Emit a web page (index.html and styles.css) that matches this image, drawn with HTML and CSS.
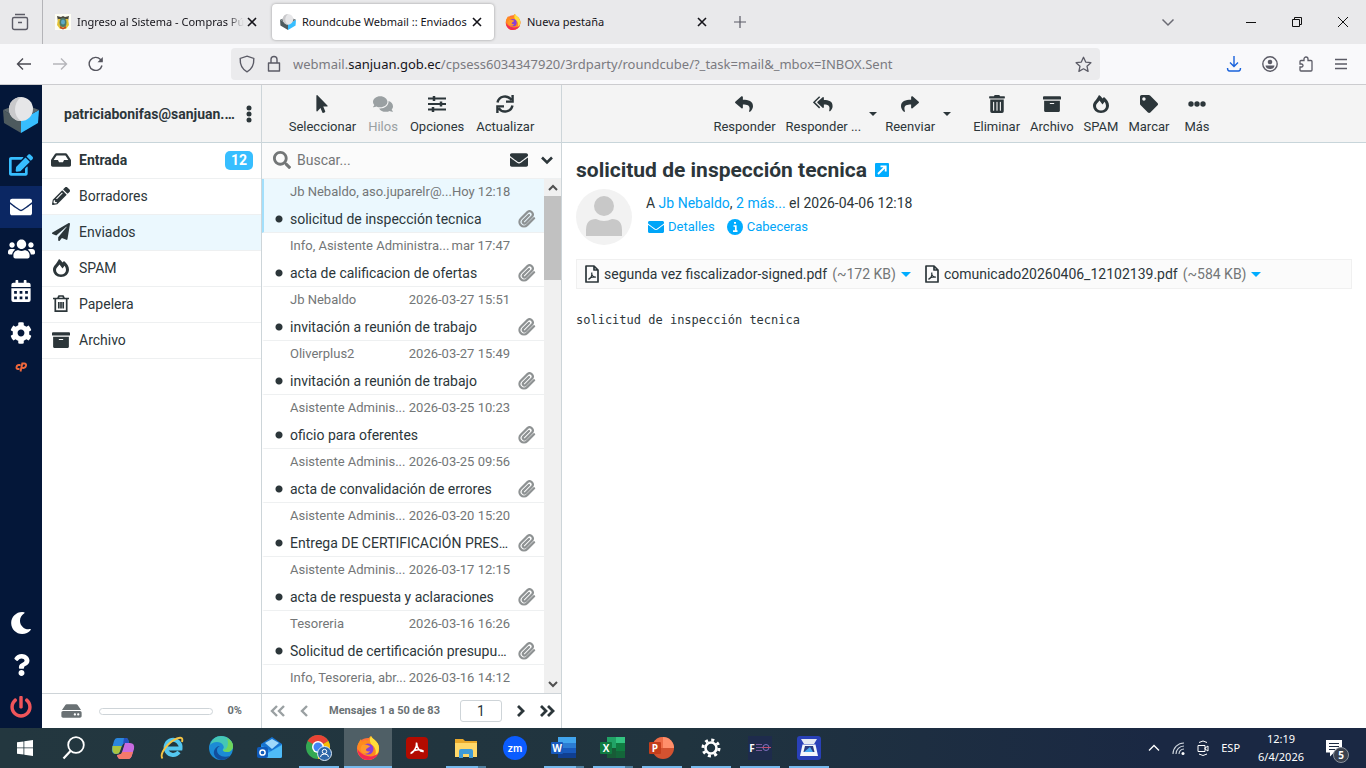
FILE: index.html
```html
<!DOCTYPE html>
<html lang="es">
<head>
	<meta charset="UTF-8">
	<title>Roundcube Webmail :: Enviados</title>
	<link rel="stylesheet" href="styles.css">
</head>
<body>
<svg class="defs" aria-hidden="true">
	<symbol id="i-x" viewBox="0 0 16 16"><path d="M4 4l8 8M12 4l-8 8" fill="none" stroke="currentColor" stroke-width="1.6"/></symbol>
	<symbol id="i-cube" viewBox="0 0 36 36"><path d="M0 13l18 10v13L1 26z" fill="#4d5a5e"/><path d="M36 13L18 23v13l17-10z" fill="#37beff"/><path d="M0 13l18-7 18 7-18 10z" fill="#5d686c"/><circle cx="18" cy="12" r="12" fill="#e6e6e8"/><path d="M18 0a12 12 0 0 0 0 24c-8-5-8-18 0-24z" fill="#c9c9cb"/></symbol>
	<symbol id="i-fox" viewBox="0 0 24 24"><circle cx="12" cy="13" r="11" fill="#ff7139"/><path d="M1.5 10C2 7 4 4.500 5 3l1 3c2-2 4-2 6-1 0-2 1-4 3-5 1 3 7 5 8 11 1 7-4 13-11 13C5 24 .5 18 1.500 10z" fill="#ff8a1e"/><path d="M15 0c1 3 8 5 8 12 0 4-2 7-4 8 2-5 0-9-3-11-2-2-3-6-1-9z" fill="#ffde3a"/><path d="M1.300 13C2 20 6 24 12 24c5 0 9-3 10.500-7-3 3-7 4-11 3-5-1-8-4-10.200-7z" fill="#f22b55"/><circle cx="12" cy="13" r="5.500" fill="#8a3fd6"/><path d="M6 9c3-1 5 0 8 1-1 2-4 2-4 4 0 1 2 2 4 1-1 3-7 4-9 0-1-2 0-4 1-6z" fill="#ff9a2a"/></symbol>
	<symbol id="i-mail" viewBox="0 0 512 512"><path fill="currentColor" d="M502.3 190.8c3.9-3.1 9.7-.2 9.7 4.7V400c0 26.5-21.5 48-48 48H48c-26.5 0-48-21.5-48-48V195.6c0-5 5.7-7.8 9.7-4.7 22.4 17.4 52.1 39.5 154.1 113.6 21.1 15.4 56.7 47.8 92.2 47.6 35.7.3 72-32.8 92.3-47.6 102-74.1 131.6-96.3 154-113.7zM256 320c23.2.4 56.6-29.2 73.4-41.4 132.7-96.3 142.8-104.7 173.4-128.7 5.8-4.5 9.2-11.5 9.2-18.9v-19c0-26.5-21.5-48-48-48H48c-26.5 0-48 21.5-48 48v19c0 7.4 3.4 14.3 9.2 18.9 30.6 23.900 40.700 32.400 173.400 128.700 16.800 12.200 50.200 41.800 73.400 41.400z"/></symbol>
	<symbol id="i-edit" viewBox="0 0 576 512"><path fill="currentColor" d="M402.600 83.200l90.200 90.200c3.800 3.800 3.800 10 0 13.800L274.400 405.600l-92.800 10.300c-12.400 1.400-22.900-9.100-21.500-21.500l10.300-92.800L388.800 83.200c3.800-3.800 10-3.800 13.800 0zm162-22.900l-48.800-48.800c-15.200-15.200-39.900-15.200-55.200 0l-35.400 35.400c-3.800 3.800-3.800 10 0 13.800l90.200 90.200c3.800 3.800 10 3.800 13.800 0l35.400-35.400c15.200-15.300 15.200-40 0-55.200zM384 346.200V448H64V128h229.800c3.200 0 6.200-1.300 8.500-3.500l40-40c7.600-7.600 2.200-20.500-8.500-20.500H48C21.500 64 0 85.500 0 112v352c0 26.500 21.500 48 48 48h352c26.500 0 48-21.500 48-48V306.200c0-10.700-12.900-16-20.500-8.500l-40 40c-2.200 2.300-3.500 5.300-3.500 8.500z"/></symbol>
	<symbol id="i-users" viewBox="0 0 640 512"><path fill="currentColor" d="M96 224c35.300 0 64-28.700 64-64s-28.700-64-64-64-64 28.700-64 64 28.700 64 64 64zm448 0c35.300 0 64-28.700 64-64s-28.700-64-64-64-64 28.700-64 64 28.700 64 64 64zm32 32h-64c-17.600 0-33.500 7.100-45.100 18.600 40.300 22.100 68.900 62 75.100 109.400h66c17.700 0 32-14.300 32-32v-32c0-35.300-28.700-64-64-64zm-256 0c61.900 0 112-50.100 112-112S381.900 32 320 32 208 82.100 208 144s50.100 112 112 112zm76.800 32h-8.300c-20.800 10-43.900 16-68.500 16s-47.600-6-68.500-16h-8.300C179.600 288 128 339.600 128 403.200V432c0 26.500 21.500 48 48 48h288c26.500 0 48-21.500 48-48v-28.800c0-63.600-51.600-115.200-115.200-115.200zm-223.700-13.400C161.500 263.100 145.600 256 128 256H64c-35.300 0-64 28.700-64 64v32c0 17.700 14.300 32 32 32h65.900c6.300-47.400 34.900-87.300 75.200-109.400z"/></symbol>
	<symbol id="i-cal" viewBox="0 0 448 512"><path fill="currentColor" fill-rule="evenodd" d="M0 192h448v272a48 48 0 0 1-48 48H48a48 48 0 0 1-48-48zM64 256v64h64v-64zM192 256v64h64v-64zM320 256v64h64v-64zM64 384v64h64v-64zM192 384v64h64v-64zM320 384v64h64v-64zM400 64h-48V16a16 16 0 0 0-16-16h-32a16 16 0 0 0-16 16v48H160V16a16 16 0 0 0-16-16h-32a16 16 0 0 0-16 16v48H48a48 48 0 0 0-48 48v48h448v-48a48 48 0 0 0-48-48z"/></symbol>
	<symbol id="i-cog" viewBox="0 0 512 512"><path fill="currentColor" d="M487.400 315.700l-42.600-24.600c4.300-23.200 4.300-47 0-70.200l42.600-24.600c4.900-2.800 7.100-8.600 5.500-14-11.100-35.600-30-67.800-54.700-94.600-3.800-4.100-10-5.100-14.800-2.300L380.800 110c-17.900-15.400-38.500-27.300-60.800-35.100V25.800c0-5.600-3.900-10.500-9.400-11.700-36.700-8.200-74.300-7.800-109.200 0-5.500 1.200-9.400 6.100-9.400 11.700V75c-22.200 7.900-42.800 19.800-60.800 35.100L88.700 85.500c-4.900-2.800-11-1.900-14.800 2.300-24.700 26.700-43.600 58.900-54.700 94.600-1.700 5.400.6 11.200 5.500 14L67.300 221c-4.300 23.200-4.300 47 0 70.200l-42.600 24.600c-4.900 2.800-7.100 8.600-5.500 14 11.100 35.600 30 67.800 54.700 94.600 3.800 4.100 10 5.100 14.800 2.300l42.600-24.600c17.900 15.400 38.500 27.300 60.800 35.100v49.200c0 5.600 3.900 10.500 9.400 11.700 36.700 8.200 74.300 7.800 109.200 0 5.500-1.200 9.400-6.100 9.400-11.700v-49.200c22.200-7.900 42.800-19.800 60.800-35.100l42.600 24.600c4.900 2.800 11 1.900 14.800-2.300 24.700-26.700 43.600-58.900 54.700-94.600 1.500-5.500-.7-11.300-5.600-14.100zM256 336c-44.100 0-80-35.900-80-80s35.900-80 80-80 80 35.900 80 80-35.900 80-80 80z"/></symbol>
	<symbol id="i-moon" viewBox="0 0 512 512"><path fill="currentColor" d="M283.211 512c78.962 0 151.079-35.925 198.857-94.792 7.068-8.708-.639-21.430-11.562-19.350-124.203 23.654-238.262-71.576-238.262-196.954 0-72.222 38.662-138.635 101.498-174.394 9.686-5.512 7.250-20.197-3.756-22.230A258.156 258.156 0 0 0 283.211 0c-141.309 0-256 114.511-256 256 0 141.309 114.511 256 256 256z"/></symbol>
	<symbol id="i-help" viewBox="0 0 384 512"><path fill="currentColor" d="M202.021 0C122.202 0 70.503 32.703 29.914 91.026c-7.363 10.580-5.093 25.086 5.178 32.874l43.138 32.709c10.373 7.865 25.132 6.026 33.253-4.148 25.049-31.381 43.630-49.449 82.757-49.449 30.764 0 68.816 19.799 68.816 49.631 0 22.552-18.617 34.134-48.993 51.164-35.423 19.860-82.299 44.576-82.299 106.405V320c0 13.255 10.745 24 24 24h72.471c13.255 0 24-10.745 24-24v-5.773c0-42.860 125.268-44.645 125.268-160.627C377.504 66.256 286.902 0 202.021 0zM192 373.459c-38.196 0-69.271 31.075-69.271 69.271 0 38.195 31.075 69.270 69.271 69.270s69.271-31.075 69.271-69.271-31.075-69.270-69.271-69.270z"/></symbol>
	<symbol id="i-power" viewBox="0 0 512 512"><path fill="currentColor" d="M400 54.100c63 45 104 118.600 104 201.900 0 136.800-110.800 247.700-247.500 248C120 504.300 8.200 393 8 256.400 7.900 173.100 48.900 99.300 111.800 54.200c11.700-8.300 28-4.800 35 7.700L162.600 90c5.900 10.500 3.100 23.800-6.600 31-41.500 30.800-68 79.600-68 134.900-.1 92.300 74.500 168.100 168 168.100 91.600 0 168.600-74.200 168-169.100-.3-51.800-24.700-101.800-68.100-134-9.700-7.200-12.400-20.500-6.500-30.900l15.800-28.100c7-12.400 23.200-16.100 34.800-7.800zM296 264V24c0-13.300-10.700-24-24-24h-32c-13.300 0-24 10.700-24 24v240c0 13.300 10.700 24 24 24h32c13.300 0 24-10.700 24-24z"/></symbol>
	<symbol id="i-inbox" viewBox="0 0 576 512"><path fill="currentColor" d="M567.938 243.908L462.250 85.374A48.003 48.003 0 0 0 422.311 64H153.689a48 48 0 0 0-39.938 21.374L8.062 243.908A47.994 47.994 0 0 0 0 270.533V400c0 26.510 21.490 48 48 48h480c26.510 0 48-21.490 48-48V270.533a47.994 47.994 0 0 0-8.062-26.625zM162.252 128h251.497l85.333 128H376l-32 64H232l-32-64H76.918l85.334-128z"/></symbol>
	<symbol id="i-pencil" viewBox="0 0 512 512"><path fill="currentColor" d="M497.900 142.100l-46.100 46.100c-4.700 4.700-12.300 4.700-17 0l-111-111c-4.700-4.700-4.700-12.300 0-17l46.100-46.100c18.700-18.700 49.100-18.700 67.900 0l60.100 60.100c18.800 18.700 18.800 49.100 0 67.900zM284.200 99.800L21.600 362.400.4 483.900c-2.900 16.400 11.400 30.600 27.800 27.800l121.500-21.300 262.600-262.600c4.700-4.700 4.700-12.300 0-17l-111-111c-4.800-4.700-12.400-4.700-17.100 0zM124.100 339.900c-5.500-5.500-5.500-14.300 0-19.800l154-154c5.500-5.500 14.300-5.500 19.800 0s5.500 14.300 0 19.800l-154 154c-5.500 5.500-14.300 5.500-19.800 0zM88 424h48v36.300l-64.500 11.300-31.100-31.100L51.700 376H88v48z"/></symbol>
	<symbol id="i-plane" viewBox="0 0 512 512"><path fill="currentColor" d="M476 3.200L12.500 270.600c-18.100 10.400-15.800 35.600 2.200 43.200L121 358.400l287.300-253.200c5.500-4.900 13.300 2.600 8.600 8.300L176 407v80.500c0 23.600 28.500 32.900 42.500 15.800L282 426l124.600 52.200c14.200 6 30.400-2.900 33-18.200l72-432C515 7.800 493.300-6.800 476 3.200z"/></symbol>
	<symbol id="i-fire" viewBox="0 0 16 18"><path fill="currentColor" fill-rule="evenodd" d="M6 0c1.500 1 2.500 2 3.500 3.500L11 2c3 2.500 5 5.500 5 8.500C16 15 12.500 18 8 18s-8-3-8-7.500C0 7 4 4.500 6 0zM6.500 5.500C5 7.500 3 9 3 11a5 4.500 0 0 0 10 0c0-1.500-.6-3-1.400-4.300L9.500 9.500z"/></symbol>
	<symbol id="i-bin" viewBox="0 0 16 18"><path fill="none" stroke="currentColor" stroke-width="1.700" d="M0 3.500h16M2.300 4v12.200h11.400V4M5 3l1-2h4l1 2M5.800 7v6.500M8 7v6.500M10.200 7v6.500"/></symbol>
	<symbol id="i-trash" viewBox="0 0 448 512"><path fill="currentColor" d="M32 464a48 48 0 0 0 48 48h288a48 48 0 0 0 48-48V128H32zm272-256a16 16 0 0 1 32 0v224a16 16 0 0 1-32 0zm-96 0a16 16 0 0 1 32 0v224a16 16 0 0 1-32 0zm-96 0a16 16 0 0 1 32 0v224a16 16 0 0 1-32 0zM432 32H312l-9.400-18.700A24 24 0 0 0 281.100 0H166.800a23.720 23.720 0 0 0-21.400 13.300L136 32H16A16 16 0 0 0 0 48v32a16 16 0 0 0 16 16h416a16 16 0 0 0 16-16V48a16 16 0 0 0-16-16z"/></symbol>
	<symbol id="i-box" viewBox="0 0 512 512"><path fill="currentColor" d="M32 448c0 17.700 14.300 32 32 32h384c17.700 0 32-14.300 32-32V160H32v288zm160-212c0-6.600 5.400-12 12-12h104c6.600 0 12 5.400 12 12v8c0 6.600-5.400 12-12 12H204c-6.600 0-12-5.400-12-12v-8zM480 32H32C14.300 32 0 46.300 0 64v48c0 8.800 7.200 16 16 16h480c8.800 0 16-7.200 16-16V64c0-17.700-14.300-32-32-32z"/></symbol>
	<symbol id="i-hdd" viewBox="0 0 576 512"><path fill="currentColor" d="M576 304v96c0 26.510-21.490 48-48 48H48c-26.510 0-48-21.490-48-48v-96c0-26.510 21.490-48 48-48h480c26.510 0 48 21.490 48 48zm-48-80a79.557 79.557 0 0 1 30.777 6.165L462.250 85.374A48.003 48.003 0 0 0 422.311 64H153.689a48 48 0 0 0-39.938 21.374L17.223 230.165A79.557 79.557 0 0 1 48 224h480zm-48 96c-17.673 0-32 14.327-32 32s14.327 32 32 32 32-14.327 32-32-14.327-32-32-32zm-96 0c-17.673 0-32 14.327-32 32s14.327 32 32 32 32-14.327 32-32-14.327-32-32-32z"/></symbol>
	<symbol id="i-pointer" viewBox="0 0 320 512"><path fill="currentColor" d="M302.189 329.126H196.105l55.831 135.993c3.889 9.428-.555 19.999-9.444 23.999l-49.165 21.427c-9.165 4-19.443-.571-23.332-9.714l-53.053-129.136-86.664 89.138C18.729 472.710 0 463.554 0 447.977V18.299C0 1.899 19.921-6.096 30.277 5.443l284.412 292.542c11.472 11.179 3.007 31.141-12.500 31.141z"/></symbol>
	<symbol id="i-chat" viewBox="0 0 576 512"><path fill="currentColor" d="M416 192c0-88.400-93.100-160-208-160S0 103.600 0 192c0 34.300 14.100 65.900 38 92-13.400 30.200-35.500 54.200-35.800 54.500-2.200 2.300-2.800 5.700-1.500 8.700S4.800 352 8 352c36.600 0 66.900-12.300 88.700-25 32.200 15.700 70.300 25 111.300 25 114.900 0 208-71.600 208-160zm122 220c23.900-26 38-57.700 38-92 0-66.900-53.500-124.200-129.300-148.100.9 6.600 1.300 13.300 1.300 20.100 0 105.900-107.700 192-240 192-10.800 0-21.300-.8-31.700-1.900C207.800 439.600 281.800 480 368 480c41 0 79.100-9.200 111.300-25 21.800 12.700 52.100 25 88.700 25 3.200 0 6.100-1.900 7.300-4.800 1.300-2.900.7-6.300-1.500-8.700-.3-.3-22.400-24.200-35.800-54.500z"/></symbol>
	<symbol id="i-sliders" viewBox="0 0 18 18"><path fill="none" stroke="currentColor" stroke-width="2" d="M0 3.500h18M0 9h18M0 14.500h18"/><path fill="none" stroke="currentColor" stroke-width="2.500" d="M6 1v5M13 6.500v5M5 12v5"/></symbol>
	<symbol id="i-sync" viewBox="0 0 18 18"><path fill="none" stroke="currentColor" stroke-width="2.400" d="M1.500 7.500a7.600 7.600 0 0 1 13.800-2.600M16.500 10.500a7.600 7.600 0 0 1-13.800 2.600M16.600 0v6.600H10M1.400 18v-6.600H8"/></symbol>
	<symbol id="i-search" viewBox="0 0 512 512"><path fill="currentColor" d="M505 442.700L405.300 343c-4.500-4.500-10.600-7-17-7H372c27.600-35.300 44-79.700 44-128C416 93.100 322.900 0 208 0S0 93.100 0 208s93.100 208 208 208c48.300 0 92.700-16.400 128-44v16.300c0 6.400 2.500 12.500 7 17l99.700 99.700c9.400 9.400 24.600 9.400 33.900 0l28.300-28.300c9.400-9.400 9.400-24.600.1-34zM208 336c-70.700 0-128-57.200-128-128 0-70.700 57.200-128 128-128 70.700 0 128 57.200 128 128 0 70.700-57.200 128-128 128z"/></symbol>
	<symbol id="i-down" viewBox="0 0 12 12"><path fill="none" stroke="currentColor" stroke-width="2.600" d="M1 3.500l5 5 5-5"/></symbol>
	<symbol id="i-clip" viewBox="0 0 24 24"><path fill="none" stroke="currentColor" stroke-width="3" stroke-linecap="round" d="M21.400 11l-9.200 9.200a6 6 0 0 1-8.500-8.500l9.200-9.200a4.300 4.300 0 0 1 6 6l-9.200 9.200a2.200 2.200 0 0 1-3-3l8-8"/></symbol>
	<symbol id="i-reply" viewBox="0 0 512 512"><path fill="currentColor" d="M8.309 189.836L184.313 37.851C199.719 24.546 224 35.347 224 56.015v80.053c160.629 1.839 288 34.032 288 186.258 0 61.441-39.581 122.309-83.333 154.132-13.653 9.931-33.111-2.533-28.077-18.631 45.344-145.012-21.507-183.510-176.590-185.742V360c0 20.700-24.300 31.453-39.687 18.164l-176.004-152c-11.071-9.562-11.086-26.753 0-36.328z"/></symbol>
	<symbol id="i-replyall" viewBox="0 0 600 512"><path fill="currentColor" d="M136 190L290 50c14-13 36-3 36 17v72c150 4 262 36 262 184 0 60-36 118-76 150-14 10-32-2-27-18 38-140-20-180-159-184v84c0 20-24 31-38 17L136 226a24 24 0 0 1 0-36z"/><path fill="none" stroke="currentColor" stroke-width="44" d="M200 40L30 206l170 166"/></symbol>
	<symbol id="i-tag" viewBox="0 0 512 512"><path fill="currentColor" d="M0 252.118V48C0 21.490 21.490 0 48 0h204.118a48 48 0 0 1 33.941 14.059l211.882 211.882c18.745 18.745 18.745 49.137 0 67.882L293.823 497.941c-18.745 18.745-49.137 18.745-67.882 0L14.059 286.059A48 48 0 0 1 0 252.118zM112 64c-26.510 0-48 21.490-48 48s21.490 48 48 48 48-21.490 48-48-21.490-48-48-48z"/></symbol>
	<symbol id="i-dots" viewBox="0 0 18 18"><g fill="currentColor"><circle cx="3" cy="9" r="2.700"/><circle cx="9" cy="9" r="2.700"/><circle cx="15" cy="9" r="2.700"/></g></symbol>
	<symbol id="i-pdf" viewBox="0 0 14 18"><path fill="none" stroke="currentColor" stroke-width="1.700" stroke-linejoin="round" d="M1 1h8l4 4v12H1zM9 1v4h4"/><path fill="none" stroke="currentColor" stroke-width="1.200" d="M3.500 14.500c2-1 3.600-4 3.300-7M6.600 8c.2 3 2.400 4.600 4.400 4M3.600 14c1.800-1.700 4.600-2.300 7.200-2"/></symbol>
</svg>

<header class="browser">
	<div class="tabbar">
		<button class="recent" aria-label="Pestañas recientes"><svg width="18" height="18" viewBox="0 0 18 18"><path d="M4 1.500h10M1.500 6q0-1.500 1.500-1.500h12q1.500 0 1.500 1.500v8.500q0 2-2 2h-11q-2 0-2-2zM7 9.500h4" fill="none" stroke="#5b5b66" stroke-width="1.400"/></svg></button>
		<div class="tab">
			<svg width="16" height="16" viewBox="0 0 16 16"><path fill="#fdfdf4" d="M0 0h16v16H0z"/><path d="M2 2l4 1 2-1 2 1 4-1-1 5H3z" fill="#4c4a3c"/><path d="M3 5h10l1 6-3 4H5l-3-4z" fill="#e3c235"/><ellipse cx="8" cy="8.500" rx="3.500" ry="4.500" fill="#4d7a6b"/><ellipse cx="8" cy="8" rx="2" ry="2.500" fill="#5fa9c9"/><path d="M5 12l3 2 3-2v2l-3 1.500L5 14z" fill="#c2442f"/></svg>
			<span class="title fade">Ingreso al Sistema - Compras Públicas</span>
			<button class="close" aria-label="Cerrar"><svg width="16" height="16"><use href="#i-x"/></svg></button>
		</div>
		<div class="tab active">
			<svg width="16" height="16"><use href="#i-cube"/></svg>
			<span class="title">Roundcube Webmail :: Enviados</span>
			<button class="close" aria-label="Cerrar"><svg width="16" height="16"><use href="#i-x"/></svg></button>
		</div>
		<div class="tab">
			<svg width="16" height="16"><use href="#i-fox"/></svg>
			<span class="title">Nueva pestaña</span>
			<button class="close" aria-label="Cerrar"><svg width="16" height="16"><use href="#i-x"/></svg></button>
		</div>
		<button class="newtab" aria-label="Nueva pestaña"><svg width="12" height="12" viewBox="0 0 12 12"><path d="M6 0v12M0 6h12" stroke="#5b5b66" stroke-width="1.200"/></svg></button>
		<div class="winbtns">
			<button aria-label="Listar pestañas"><svg width="14" height="14" viewBox="0 0 14 14"><path d="M1.500 4.500L7 10l5.500-5.500" fill="none" stroke="#6b6b74" stroke-width="1.500"/></svg></button>
			<button class="min" aria-label="Minimizar"><svg width="10" height="10" viewBox="0 0 10 10"><path d="M0 5.500h10" stroke="#111"/></svg></button>
			<button aria-label="Restaurar"><svg width="10" height="10" viewBox="0 0 10 10"><path d="M.5 2.500h7v7h-7zM2.500 2.500v-2h7v7h-2" fill="none" stroke="#111"/></svg></button>
			<button aria-label="Cerrar ventana"><svg width="10" height="10" viewBox="0 0 10 10"><path d="M0 0l10 10M10 0L0 10" stroke="#111"/></svg></button>
		</div>
	</div>
	<div class="navbar">
		<div class="navbtns">
			<button aria-label="Atrás"><svg width="16" height="16" viewBox="0 0 16 16"><path d="M15 8H2M7 2.500L1.500 8 7 13.500" fill="none" stroke="#4a4a52" stroke-width="1.400"/></svg></button>
			<button aria-label="Adelante"><svg width="16" height="16" viewBox="0 0 16 16"><path d="M1 8h13M9 2.500L14.500 8 9 13.500" fill="none" stroke="#b5b5ba" stroke-width="1.400"/></svg></button>
			<button aria-label="Recargar"><svg width="16" height="16" viewBox="0 0 16 16"><path d="M14 9.500A6.500 6.500 0 1 1 12.500 3.500L14 5" fill="none" stroke="#55555e" stroke-width="1.400"/><path d="M14.800 1v5.300H9.500z" fill="#55555e"/></svg></button>
		</div>
		<div class="url">
			<svg width="16" height="18" viewBox="0 0 16 18"><path d="M8 1.200l6.800 2.200c.3 6-1.500 10.600-6.800 13.400C2.700 14 .9 9.400 1.200 3.400z" fill="none" stroke="#5b5b66" stroke-width="1.400"/></svg>
			<svg width="14" height="18" viewBox="0 0 14 18"><path d="M1.500 8h11v8h-11zM4 8V4.500a3 3 0 0 1 6 0V8" fill="none" stroke="#5b5b66" stroke-width="1.400" stroke-linejoin="round"/></svg>
			<span class="address">webmail.<b>sanjuan.gob.ec</b>/cpsess6034347920/3rdparty/roundcube/?_task=mail&amp;_mbox=INBOX.Sent</span>
			<svg width="17" height="17" viewBox="0 0 17 17"><path d="M8.500 1.300l2.200 4.800 5.200.6-3.900 3.500 1.100 5.200-4.600-2.600-4.600 2.600L5 10.200 1.100 6.700l5.200-.6z" fill="none" stroke="#5b5b66" stroke-width="1.300" stroke-linejoin="round"/></svg>
		</div>
		<div class="tools">
			<button aria-label="Descargas"><svg width="16" height="16" viewBox="0 0 16 16"><path d="M8 0v10.500M4 6.500l4 4 4-4M1.500 12q0 3 2 3h9q2 0 2-3" fill="none" stroke="#1a63dc" stroke-width="1.400"/></svg></button>
			<button aria-label="Cuenta"><svg width="16" height="16" viewBox="0 0 16 16"><circle cx="8" cy="8" r="7.200" fill="none" stroke="#5b5b66" stroke-width="1.400"/><circle cx="8" cy="6" r="2.300" fill="#5b5b66"/><path d="M3.500 9.500h9q-.5 3.500-4.500 3.500T3.500 9.500z" fill="#5b5b66"/></svg></button>
			<button aria-label="Extensiones"><svg width="16" height="16" viewBox="0 0 16 16"><path d="M2 5.500q0-1 1-1h3V3a2 2 0 0 1 4 0v1.500h3q1 0 1 1V14q0 1-1 1H3q-1 0-1-1v-3h1.500a1.500 1.500 0 0 0 0-3H2z" fill="none" stroke="#5b5b66" stroke-width="1.300"/></svg></button>
			<button aria-label="Menú"><svg width="14" height="14" viewBox="0 0 14 14"><path d="M1 2.500h12M1 7h12M1 11.500h12" stroke="#5b5b66" stroke-width="1.300"/></svg></button>
		</div>
	</div>
</header>

<div class="app">
	<nav class="taskmenu">
		<svg class="logo" width="36" height="36"><use href="#i-cube"/></svg>
		<a class="compose" href="#" aria-label="Redactar"><svg width="24" height="22"><use href="#i-edit"/></svg></a>
		<a class="selected" href="#" aria-label="Correo"><svg width="22" height="22"><use href="#i-mail"/></svg></a>
		<a href="#" aria-label="Contactos"><svg width="27" height="22"><use href="#i-users"/></svg></a>
		<a href="#" aria-label="Calendario"><svg width="20" height="22"><use href="#i-cal"/></svg></a>
		<a href="#" aria-label="Configuración"><svg width="22" height="22"><use href="#i-cog"/></svg></a>
		<a class="cpanel" href="#" aria-label="cPanel"><svg width="12" height="10" viewBox="0 0 12 10"><path d="M5.500 3H3.800Q2 3 1.600 5T3 7h1.500M5.500 9.500L7.300 1.500h2Q11.400 1.500 11 3.700T8.500 6H7.300" fill="none" stroke="#f0683c" stroke-width="1.900"/></svg></a>
		<a class="bottom" href="#" aria-label="Modo oscuro"><svg width="22" height="22"><use href="#i-moon"/></svg></a>
		<a href="#" aria-label="Ayuda"><svg width="17" height="22"><use href="#i-help"/></svg></a>
		<a class="logout" href="#" aria-label="Cerrar sesión"><svg width="22" height="22"><use href="#i-power"/></svg></a>
	</nav>

	<aside class="sidebar">
		<div class="header account">
			<span>patriciabonifas@sanjuan.gob.ec</span>
			<button aria-label="Opciones de carpeta"><svg width="6" height="18" viewBox="0 0 6 18"><g fill="#2c363a"><circle cx="3" cy="3" r="2.500"/><circle cx="3" cy="9" r="2.500"/><circle cx="3" cy="15" r="2.500"/></g></svg></button>
		</div>
		<ul class="folders">
			<li class="unread"><a href="#"><svg width="20" height="18"><use href="#i-inbox"/></svg>Entrada<span class="count">12</span></a></li>
			<li><a href="#"><svg width="20" height="18"><use href="#i-pencil"/></svg>Borradores</a></li>
			<li class="selected"><a href="#"><svg width="20" height="18"><use href="#i-plane"/></svg>Enviados</a></li>
			<li><a href="#"><svg width="20" height="18"><use href="#i-fire"/></svg>SPAM</a></li>
			<li><a href="#"><svg width="20" height="18"><use href="#i-bin"/></svg>Papelera</a></li>
			<li><a href="#"><svg width="20" height="18"><use href="#i-box"/></svg>Archivo</a></li>
		</ul>
		<div class="footer quota">
			<svg width="21" height="18"><use href="#i-hdd"/></svg>
			<span class="bar"></span>
			<span>0%</span>
		</div>
	</aside>

	<section class="list">
		<div class="header toolbar">
			<button><svg width="18" height="18"><use href="#i-pointer"/></svg>Seleccionar</button>
			<button disabled><svg width="20" height="18"><use href="#i-chat"/></svg>Hilos</button>
			<button><svg width="18" height="18"><use href="#i-sliders"/></svg>Opciones</button>
			<button><svg width="18" height="18"><use href="#i-sync"/></svg>Actualizar</button>
		</div>
		<div class="searchbar">
			<svg width="18" height="18"><use href="#i-search"/></svg>
			<input type="text" placeholder="Buscar..." aria-label="Buscar">
			<button aria-label="No leídos"><svg width="18" height="18"><use href="#i-mail"/></svg></button>
			<button aria-label="Opciones de búsqueda"><svg width="12" height="12"><use href="#i-down"/></svg></button>
		</div>
		<div class="scroller">
			<ul class="messages">
				<li class="selected">
					<div class="meta"><span>Jb Nebaldo, aso.juparelr@...</span><span>Hoy 12:18</span></div>
					<a href="#">solicitud de inspección tecnica</a>
					<svg class="clip" width="18" height="18"><use href="#i-clip"/></svg>
				</li>
				<li>
					<div class="meta"><span>Info, Asistente Administra...</span><span>mar 17:47</span></div>
					<a href="#">acta de calificacion de ofertas</a>
					<svg class="clip" width="18" height="18"><use href="#i-clip"/></svg>
				</li>
				<li>
					<div class="meta"><span>Jb Nebaldo</span><span>2026-03-27 15:51</span></div>
					<a href="#">invitación a reunión de trabajo</a>
					<svg class="clip" width="18" height="18"><use href="#i-clip"/></svg>
				</li>
				<li>
					<div class="meta"><span>Oliverplus2</span><span>2026-03-27 15:49</span></div>
					<a href="#">invitación a reunión de trabajo</a>
					<svg class="clip" width="18" height="18"><use href="#i-clip"/></svg>
				</li>
				<li>
					<div class="meta"><span>Asistente Adminis...</span><span>2026-03-25 10:23</span></div>
					<a href="#">oficio para oferentes</a>
					<svg class="clip" width="18" height="18"><use href="#i-clip"/></svg>
				</li>
				<li>
					<div class="meta"><span>Asistente Adminis...</span><span>2026-03-25 09:56</span></div>
					<a href="#">acta de convalidación de errores</a>
					<svg class="clip" width="18" height="18"><use href="#i-clip"/></svg>
				</li>
				<li>
					<div class="meta"><span>Asistente Adminis...</span><span>2026-03-20 15:20</span></div>
					<a href="#">Entrega DE CERTIFICACIÓN PRESUPUESTARIA</a>
					<svg class="clip" width="18" height="18"><use href="#i-clip"/></svg>
				</li>
				<li>
					<div class="meta"><span>Asistente Adminis...</span><span>2026-03-17 12:15</span></div>
					<a href="#">acta de respuesta y aclaraciones</a>
					<svg class="clip" width="18" height="18"><use href="#i-clip"/></svg>
				</li>
				<li>
					<div class="meta"><span>Tesoreria</span><span>2026-03-16 16:26</span></div>
					<a href="#">Solicitud de certificación presupuestaria</a>
					<svg class="clip" width="18" height="18"><use href="#i-clip"/></svg>
				</li>
				<li>
					<div class="meta"><span>Info, Tesoreria, abr...</span><span>2026-03-16 14:12</span></div>
				</li>
			</ul>
			<div class="scrollbar">
				<svg width="10" height="10" viewBox="0 0 10 10"><path d="M1 7l4-4 4 4" fill="none" stroke="#505050" stroke-width="2"/></svg>
				<div class="thumb"></div>
				<svg width="10" height="10" viewBox="0 0 10 10"><path d="M1 3l4 4 4-4" fill="none" stroke="#505050" stroke-width="2"/></svg>
			</div>
		</div>
		<div class="footer pager">
			<button disabled aria-label="Primera página"><svg width="16" height="14" viewBox="0 0 16 14"><path d="M8 2L3 7l5 5M15 2l-5 5 5 5" fill="none" stroke="currentColor" stroke-width="2.400"/></svg></button>
			<button disabled aria-label="Página anterior"><svg width="10" height="14" viewBox="0 0 10 14"><path d="M8 2L3 7l5 5" fill="none" stroke="currentColor" stroke-width="2.400"/></svg></button>
			<span>Mensajes 1 a 50 de 83</span>
			<input type="text" value="1" aria-label="Página">
			<button aria-label="Página siguiente"><svg width="10" height="14" viewBox="0 0 10 14"><path d="M2 2l5 5-5 5" fill="none" stroke="currentColor" stroke-width="2.800"/></svg></button>
			<button aria-label="Última página"><svg width="16" height="14" viewBox="0 0 16 14"><path d="M1 2l5 5-5 5M8 2l5 5-5 5" fill="none" stroke="currentColor" stroke-width="2.800"/></svg></button>
		</div>
	</section>

	<main class="content">
		<div class="header toolbar">
			<button><svg width="18" height="18"><use href="#i-reply"/></svg>Responder</button>
			<button><svg width="20" height="18"><use href="#i-replyall"/></svg>Responder ...</button>
			<button class="drop" aria-label="Opciones de respuesta"></button>
			<button><svg class="flip" width="18" height="18"><use href="#i-reply"/></svg>Reenviar</button>
			<button class="drop" aria-label="Opciones de reenvío"></button>
			<button class="spaced"><svg width="18" height="18"><use href="#i-trash"/></svg>Eliminar</button>
			<button><svg width="18" height="18"><use href="#i-box"/></svg>Archivo</button>
			<button><svg width="18" height="18"><use href="#i-fire"/></svg>SPAM</button>
			<button><svg width="18" height="18"><use href="#i-tag"/></svg>Marcar</button>
			<button class="more"><svg width="18" height="18"><use href="#i-dots"/></svg>Más</button>
		</div>
		<article class="message">
			<h2>solicitud de inspección tecnica <a href="#" aria-label="Abrir en ventana nueva"><svg width="14" height="14" viewBox="0 0 14 14"><rect width="14" height="14" rx="1" fill="#00acff"/><path d="M3 11l7-7M5.500 3.300h5.200v5.200" fill="none" stroke="#fff" stroke-width="1.800"/></svg></a></h2>
			<div class="summary">
				<svg width="56" height="56" viewBox="0 0 56 56"><circle cx="28" cy="28" r="28" fill="#f2f2f2"/><circle cx="28" cy="17" r="10" fill="#c8c8c8"/><path d="M10 47v-6q0-11 10-11 8 4 16 0 10 0 10 11v6z" fill="#c8c8c8"/></svg>
				<div>
					<p>A <a href="#">Jb Nebaldo</a>, <a href="#">2 más...</a> el 2026-04-06 12:18</p>
					<p class="links">
						<a href="#"><svg width="16" height="16"><use href="#i-mail"/></svg>Detalles</a>
						<a href="#"><svg width="16" height="16" viewBox="0 0 16 16"><circle cx="8" cy="8" r="8" fill="#00acff"/><path d="M6.500 7h2.300v5M6 12.200h4.500M7 3.800h2" fill="none" stroke="#fff" stroke-width="1.700"/></svg>Cabeceras</a>
					</p>
				</div>
			</div>
			<ul class="attachments">
				<li><a href="#"><svg width="14" height="18"><use href="#i-pdf"/></svg>segunda vez fiscalizador-signed.pdf <span>(~172 KB)</span></a><button aria-label="Opciones"></button></li>
				<li><a href="#"><svg width="14" height="18"><use href="#i-pdf"/></svg>comunicado20260406_12102139.pdf <span>(~584 KB)</span></a><button aria-label="Opciones"></button></li>
			</ul>
			<pre>solicitud de inspección tecnica</pre>
		</article>
	</main>
</div>

<footer class="taskbar">
	<button aria-label="Inicio"><svg width="16" height="16" viewBox="0 0 16 16"><path fill="#fff" d="M0 2.300L6.500 1.400v6.100H0zM7.300 1.300L16 0v7.500H7.300zM0 8.300h6.500v6.300L0 13.700zM7.300 8.300H16V16l-8.700-1.200z"/></svg></button>
	<button aria-label="Buscar"><svg width="24" height="24" viewBox="0 0 24 24"><circle cx="14" cy="9" r="7.800" fill="none" stroke="#fff" stroke-width="1.800"/><path d="M8.500 15L1.500 22.500" stroke="#fff" stroke-width="2.200"/></svg></button>
	<button aria-label="Copilot"><svg width="24" height="24" viewBox="0 0 24 24"><path d="M6 2h9q2 0 2.500 3l.5 2h-4q-2 0-3 3l-2 6q-1 2-4 2-5 0-4-6l2-7Q4 2 6 2z" fill="#2a86dd"/><path d="M1.500 10q-1 8 3.500 8 3 0 4-2l2-6z" fill="#a9c43f"/><path d="M13 2h2q2 0 2.500 3l.5 2h-4l-2 1z" fill="#2450c0"/><path d="M14 7h5q5 0 4 6l-2 6q-1 4-4 4H9q-2 0-3-4 4 0 5-3l2-6z" fill="#c86be0"/><path d="M6 19q4 0 5-3h11l-1 3q-1 4-4 4H9q-2 0-3-4z" fill="#f4796b"/><path d="M11 10h1.500L10 18H8z" fill="#22363f"/></svg></button>
	<button aria-label="Internet Explorer"><svg width="24" height="24" viewBox="0 0 24 24"><path d="M19 16a7.500 7.500 0 1 1 1.500-3.500H6" fill="none" stroke="#54c6ef" stroke-width="4"/><path d="M2.500 22.500C-1 18 8 6 17 2.500c5-2 6 0 5 3.500" fill="none" stroke="#f5c444" stroke-width="1.900"/></svg></button>
	<button aria-label="Edge"><svg width="24" height="24" viewBox="0 0 24 24"><circle cx="12" cy="12" r="12" fill="#1c8bd5"/><path d="M1 9C3 3 7 0 12 0c7 0 12 5 12 10 0 4-3 6-6 6-3 0-5-1-4-3 1-1 1-2 0-4-2-4-10-4-13 0z" fill="#45c7b5"/><path d="M18 2c4 2 6 5 6 8 0 4-3 6-6 6-2 0-4-1-4-2 5 0 6-7 4-12z" fill="#6ed65c"/><path d="M8 14c0 5 5 8 13 6-3 3-6 4-9 4-5-1-8-5-7-9 1-3 3-5 6-5-2 1-3 2-3 4z" fill="#124f9d"/></svg></button>
	<button aria-label="Outlook"><svg width="26" height="24" viewBox="0 0 26 24"><path d="M4 8L15 1l10 7v12q0 2-2 2H6q-2 0-2-2z" fill="#1673d0"/><path d="M8 7l7-4 7 4-7 6z" fill="#9fd8fb"/><path d="M4 9l10 6 11-7v12q0 2-2 2H6q-2 0-2-2z" fill="#2590ea"/><path d="M4 21l21-12v11q0 2-2 2H6z" fill="#4fbcf8"/><rect y="11" width="11" height="11" rx="2" fill="#0f5bbb"/><circle cx="5.500" cy="16.500" r="2.600" fill="none" stroke="#fff" stroke-width="1.500"/></svg></button>
	<button class="open" aria-label="Chrome"><svg width="26" height="26" viewBox="0 0 26 26"><circle cx="12" cy="12" r="12" fill="#34a853"/><path d="M12 12L1.600 6A12 12 0 0 1 22.400 6z" fill="#ea4335"/><path d="M12 12L22.400 6A12 12 0 0 1 12 24z" fill="#fbbc05"/><circle cx="12" cy="12" r="6" fill="#fff"/><circle cx="12" cy="12" r="4.500" fill="#4285f4"/><circle cx="18.500" cy="18.500" r="7" fill="#2c66a8" stroke="#dbe9f8"/><circle cx="18.500" cy="16.500" r="2.200" fill="none" stroke="#fff"/><path d="M14.500 22q0-3 4-3t4 3" fill="none" stroke="#fff"/></svg></button>
	<button class="open current" aria-label="Firefox"><svg width="24" height="24"><use href="#i-fox"/></svg></button>
	<button aria-label="Acrobat"><svg width="22" height="22" viewBox="0 0 22 22"><rect width="22" height="22" rx="4" fill="#b30b00"/><path d="M4.500 16.500c3-1 6.500-6 6-11M10.700 6c0 5 3 9 7 8.500M5 16c3-3 8-4 12.500-2" fill="none" stroke="#fff" stroke-width="1.500"/></svg></button>
	<button class="open multi" aria-label="Explorador"><svg width="22" height="20" viewBox="0 0 22 20"><path d="M0 1h8l2 2h12v16H0z" fill="#e9a92b"/><path d="M0 5h22v14H0z" fill="#ffd869"/><path d="M4 20v-7q0-2 2-2h10q2 0 2 2v7h-4v-4H8v4z" fill="#3f9bd8"/></svg></button>
	<button aria-label="Zoom"><span class="zoom">zm</span></button>
	<button class="open multi" aria-label="Word"><svg width="26" height="22" viewBox="0 0 26 22"><path d="M7 0h18v6H7z" fill="#41a5ee"/><path d="M7 6h18v5H7z" fill="#2b7cd3"/><path d="M7 11h18v5H7z" fill="#185abd"/><path d="M7 16h18v5H7z" fill="#103f91"/><rect y="5" width="12" height="12" rx="1" fill="#185abd"/><text x="6" y="15">W</text></svg></button>
	<button class="open multi" aria-label="Excel"><svg width="26" height="22" viewBox="0 0 26 22"><path d="M7 0h9v11H7z" fill="#21a366"/><path d="M16 0h9v6h-9z" fill="#33c481"/><path d="M7 11h9v10H7z" fill="#185c37"/><path d="M16 6h9v8h-9z" fill="#107c41"/><path d="M16 14h9v7h-9z" fill="#14663a"/><rect y="5" width="12" height="12" rx="1" fill="#107c41"/><text x="6" y="15">X</text></svg></button>
	<button class="open" aria-label="PowerPoint"><svg width="26" height="22" viewBox="0 0 26 22"><circle cx="14" cy="11" r="11" fill="#d35230"/><path d="M14 0a11 11 0 0 1 11 11H14z" fill="#ff8f6b"/><path d="M14 0v11H3A11 11 0 0 1 14 0z" fill="#ed6c47"/><rect y="5" width="12" height="12" rx="1" fill="#c43e1c"/><text x="6" y="15">P</text></svg></button>
	<button class="open" aria-label="Configuración"><svg width="20" height="20" viewBox="0 0 20 20"><circle cx="10" cy="10" r="5.500" fill="none" stroke="#fff" stroke-width="2.600"/><circle cx="10" cy="10" r="8" fill="none" stroke="#fff" stroke-width="3" stroke-dasharray="3 3.280"/></svg></button>
	<button class="open" aria-label="FE"><svg width="24" height="24" viewBox="0 0 24 24"><path d="M0 0h24v24H0z" fill="#1e2b4c"/><text x="4" y="16">F</text><path d="M8 8.500h6M8 11.500h6M8 14.500h6" stroke="#7b5a9c"/><circle cx="18" cy="11.500" r="3" fill="none" stroke="#7d6fc0"/><path d="M14 11.500h9" stroke="#c24c6b"/></svg></button>
	<button class="open" aria-label="Escáner"><svg width="24" height="24" viewBox="0 0 24 24"><rect width="24" height="24" rx="3" fill="#2940b8"/><path d="M4 3h16l-3 5H7z" fill="#e5e9f2"/><path d="M5.500 8.500h13L21 20H3z" fill="#f5f7fb"/><path d="M8 10h8l1.500 6h-11z" fill="#2a3b80"/><path d="M13 11l3 5H7z" fill="#48a9f0"/></svg></button>
	<div class="tray">
		<svg width="12" height="12" viewBox="0 0 12 12"><path d="M1 8.500l5-5 5 5" fill="none" stroke="#fff" stroke-width="1.300"/></svg>
		<svg width="13" height="13" viewBox="0 0 13 13"><path d="M1 12A11 11 0 0 1 12 1M4 12a8 8 0 0 1 8-8M7 12a5 5 0 0 1 5-5" fill="none" stroke="#cfd6de" stroke-width="1.100"/><circle cx="11" cy="11.500" r="1.500" fill="#fff"/></svg>
		<svg width="12" height="16" viewBox="0 0 12 16"><path d="M1 5.500h7v6H1zM8 8l3-2v5L8 9zM2 2.500q4-3 8 0M2 14q4 3 8 0" fill="none" stroke="#fff"/></svg>
		<span>ESP</span>
		<time>12:19<br>6/4/2026</time>
		<div class="notif"><svg width="16" height="17" viewBox="0 0 16 17"><path d="M0 0h16v12.500H8L4 16.500v-4H0z" fill="#fff"/><path d="M3 3.500h10M3 6.500h10M3 9.500h6" stroke="#1b2a41"/></svg><b>5</b></div>
	</div>
</footer>
</body>
</html>
```
FILE: styles.css
```css
* {
	box-sizing: border-box;
	margin: 0;
	padding: 0;
}

body {
	display: flex;
	flex-direction: column;
	height: 100vh;
	overflow: hidden;
	font: 14px/20px Roboto, sans-serif;
	color: #2c363a;
	background: #fff;
}

ul {
	list-style: none;
}

a {
	color: inherit;
	text-decoration: none;
}

button {
	border: 0;
	background: none;
	font: inherit;
	color: inherit;
}

svg {
	flex: none;
	display: block;
}

.defs {
	position: absolute;
	width: 0;
	height: 0;
}

/* browser */
.browser {
	flex: none;
	font-family: "Noto Sans", sans-serif;
	color: #15141a;
}

.tabbar {
	display: flex;
	align-items: center;
	height: 44px;
	background: #e9e9eb;
}

.recent {
	width: 43px;
	height: 44px;
	padding-left: 11px;
	border-right: 1px solid #b4b4b8;
}

.tab {
	display: flex;
	align-items: center;
	gap: 6px;
	width: 222px;
	height: 36px;
	margin-right: 3px;
	padding: 0 9px 0 8px;
	border-radius: 4px;
	font-size: 11px;
}

.recent + .tab {
	padding-left: 12px;
	width: 226px;
}

.tab.active {
	background: #fff;
	box-shadow: 0 0 3px rgba(0, 0, 0, .35);
}

.tab .title {
	flex: 1;
	overflow: hidden;
	white-space: nowrap;
}

.tab .fade {
	-webkit-mask-image: linear-gradient(90deg, #000 90%, transparent);
	mask-image: linear-gradient(90deg, #000 90%, transparent);
}

.tab .close {
	margin-left: -6px;
}

.newtab {
	padding: 0 12px;
}

.winbtns {
	display: flex;
	margin-left: auto;
}

.winbtns button {
	display: flex;
	justify-content: center;
	width: 46px;
	align-items: center;
}

.winbtns .min {
	margin-left: 37px;
}

.navbar {
	display: flex;
	align-items: center;
	height: 41px;
	background: #f9f9fb;
	border-bottom: 1px solid #cccccf;
}

.navbtns {
	display: flex;
	gap: 20px;
	padding-left: 16px;
}

.url {
	display: flex;
	align-items: center;
	gap: 12px;
	flex: 1;
	height: 32px;
	margin-left: 127px;
	padding: 0 8px;
	border-radius: 4px;
	background: #ebebed;
}

.address {
	flex: 1;
	overflow: hidden;
	white-space: nowrap;
	font-size: 13px;
	color: #7a7a80;
}

.address b {
	font-weight: normal;
	color: #15141a;
}

.tools {
	display: flex;
	gap: 20px;
	align-items: center;
	padding: 0 18px 0 126px;
}

/* webmail */
.app {
	display: flex;
	flex: 1;
	min-height: 0;
}

.taskmenu {
	display: flex;
	flex-direction: column;
	flex: none;
	width: 42px;
	background: #041739;
	color: #fff;
}

.taskmenu .logo {
	margin: 12px 3px 11px;
}

.taskmenu a {
	display: flex;
	align-items: center;
	justify-content: center;
	height: 42px;
}

.taskmenu .selected {
	background: #0b2763;
}

.taskmenu .compose {
	color: #37beff;
}

.taskmenu .cpanel {
	height: 26px;
}

.taskmenu .bottom {
	margin-top: auto;
}

.taskmenu .logout {
	color: #f0555a;
}

.header {
	display: flex;
	flex: none;
	height: 58px;
	background: #f4f4f4;
	border-bottom: 1px solid #c8d5da;
}

.footer {
	display: flex;
	flex: none;
	align-items: center;
	height: 35px;
	border-top: 1px solid #ced4d8;
	font-size: 11px;
	font-weight: bold;
	color: #6a7174;
}

.sidebar {
	display: flex;
	flex-direction: column;
	flex: none;
	width: 220px;
	border-right: 1px solid #cdd5d9;
}

.account {
	align-items: center;
	gap: 10px;
	padding: 0 9px 0 22px;
	font-weight: bold;
}

.account span {
	flex: 1;
	overflow: hidden;
	white-space: nowrap;
	text-overflow: ellipsis;
}

.folders {
	flex: 1;
}

.folders a {
	display: flex;
	align-items: center;
	gap: 8px;
	height: 36px;
	padding: 0 8px 1px 9px;
	border-bottom: 1px solid #eef0f1;
}

.folders .selected {
	background: #ebf8fe;
}

.folders .unread {
	font-weight: bold;
}

.count {
	margin-left: auto;
	padding: 0 6px;
	border-radius: 5px;
	background: #37beff;
	color: #fff;
	line-height: 19px;
}

.quota {
	gap: 15px;
	padding: 0 19px;
}

.quota svg {
	margin-right: 2px;
}

.quota .bar {
	flex: 1;
	height: 7px;
	border: 1px solid #ced4d8;
	border-radius: 4px;
}

.list {
	display: flex;
	flex-direction: column;
	flex: none;
	width: 300px;
	border-right: 1px solid #cdd5d9;
}

.toolbar {
	justify-content: center;
}

.toolbar button {
	display: flex;
	flex-direction: column;
	align-items: center;
	gap: 4px;
	padding: 10px 6px 0;
	font-size: 13px;
}

.toolbar button:disabled,
.pager button:disabled {
	color: #9aa0a2;
}

.content .toolbar button {
	padding: 10px 5px 0;
}

.content .toolbar .drop {
	width: 14px;
	padding: 27px 0 0;
}

.toolbar .drop::before {
	content: "";
	border: 4px solid transparent;
	border-top-color: #2c363a;
	border-bottom: 0;
}

.toolbar .spaced {
	margin-left: 14px;
}

.content .toolbar .more {
	padding: 10px 10px 0;
}

.flip {
	transform: scaleX(-1);
}

.searchbar {
	display: flex;
	flex: none;
	align-items: center;
	height: 36px;
	padding: 0 8px 1px 11px;
	background: #fbfbfb;
	border-bottom: 1px solid #eef0f1;
}

.searchbar svg {
	color: #2c363a;
}

.searchbar > svg {
	color: #737677;
}

.searchbar input {
	flex: 1;
	min-width: 0;
	padding: 0 6px;
	border: 0;
	background: none;
	font: inherit;
	outline: none;
}

.searchbar button + button {
	margin-left: 13px;
}

input::placeholder {
	color: #737677;
}

.scroller {
	display: flex;
	flex: 1;
	min-height: 0;
}

.messages {
	flex: 1;
	min-width: 0;
	overflow: hidden;
}

.messages li {
	display: grid;
	grid-template-columns: 220px 1fr;
	grid-template-rows: 26px 27px;
	column-gap: 8px;
	align-items: center;
	padding-left: 26px;
	border-left: 2px solid transparent;
	border-bottom: 1px solid #eef0f1;
}

.messages .selected {
	background: #ebf8fe;
	border-left-color: #a2dffb;
}

.meta {
	grid-column: 1;
	display: flex;
	justify-content: space-between;
	font-size: 13px;
	color: #737677;
	white-space: nowrap;
}

.messages a {
	grid-row: 2;
	margin-left: -16px;
	padding-left: 16px;
	overflow: hidden;
	white-space: nowrap;
	text-overflow: ellipsis;
	background: radial-gradient(circle, #2c363a 3px, transparent 4px) 1px 6px / 8px 8px no-repeat;
}

.clip {
	grid-row: 2;
	color: #8e9293;
}

.scrollbar {
	display: flex;
	flex-direction: column;
	align-items: center;
	width: 17px;
	padding: 4px 0;
	background: #f0f0f0;
}

.thumb {
	width: 17px;
	height: 84px;
	margin: 3px 0 auto;
	background: #c1c1c1;
}

.pager {
	gap: 14px;
	padding: 0 5px 0 7px;
}

.pager span {
	flex: 1;
	text-align: center;
	white-space: nowrap;
}

.pager input {
	width: 42px;
	height: 22px;
	border: 1px solid #ced4d8;
	border-radius: 3px;
	font: 14px Roboto, sans-serif;
	color: #2c363a;
	text-align: center;
}

.pager button {
	color: #2c363a;
}

.content {
	flex: 1;
	min-width: 0;
}

.message {
	padding: 14px;
}

.message h2 {
	display: flex;
	align-items: center;
	gap: 8px;
	font-size: 21px;
	line-height: 26px;
}

.summary {
	display: flex;
	gap: 14px;
	padding: 6px 0 14px;
}

.summary p {
	padding-top: 4px;
}

.summary a {
	color: #00a5f8;
}

.links {
	display: flex;
	gap: 10px;
	font-size: 13px;
}

.links a {
	display: flex;
	align-items: center;
	gap: 4px;
	padding-left: 2px;
}

.attachments {
	display: flex;
	gap: 14px;
	height: 30px;
	padding: 0 8px;
	align-items: center;
	background: #fbfbfb;
	border: 1px solid #f0f0f0;
}

.attachments li {
	display: flex;
	align-items: center;
	gap: 5px;
}

.attachments a {
	display: flex;
	align-items: center;
	gap: 5px;
}

.attachments span {
	color: #737677;
}

.attachments button {
	border: 5px solid transparent;
	border-top-color: #00acff;
	border-bottom: 0;
}

.message pre {
	padding: 21px 0;
	font: 12px/20px "DejaVu Sans Mono", monospace;
}

/* taskbar */
.taskbar {
	display: flex;
	flex: none;
	gap: 1px;
	height: 40px;
	padding-left: 1px;
	background: linear-gradient(90deg, #23373f, #20343f 50%, #1a2843 85%);
	color: #fff;
	font: 11px/18px "Noto Sans", sans-serif;
}

.taskbar button {
	display: flex;
	align-items: center;
	justify-content: center;
	width: 48px;
}

.taskbar .open {
	background: linear-gradient(#76b9ed, #76b9ed) center bottom / 40px 2px no-repeat;
}

.taskbar .multi {
	background: linear-gradient(90deg, #76b9ed 32px, #4f7f9f 32px) center bottom / 40px 2px no-repeat;
}

.taskbar .current {
	background: linear-gradient(#76b9ed, #76b9ed) center bottom / 48px 2px no-repeat #4f5f66;
}

.taskbar text {
	fill: #fff;
	font: bold 10px "Open Sans", sans-serif;
	text-anchor: middle;
}

.zoom {
	width: 24px;
	border-radius: 12px;
	background: #0b5cff;
	font: bold 11px/24px Lato, sans-serif;
}

.tray {
	display: flex;
	align-items: center;
	gap: 12px;
	margin-left: auto;
	padding-right: 24px;
}

.tray time {
	margin-left: 6px;
	text-align: center;
}

.notif {
	position: relative;
	margin-left: 10px;
}

.notif b {
	position: absolute;
	left: 7px;
	top: 7px;
	width: 16px;
	border: 1px solid #8a919c;
	border-radius: 8px;
	background: #3a414e;
	font-size: 10px;
	line-height: 14px;
	text-align: center;
}
```
